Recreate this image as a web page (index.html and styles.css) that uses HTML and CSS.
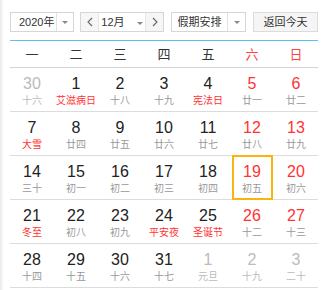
FILE: index.html
```html
<!DOCTYPE html>
<html lang="zh-CN">
<head>
    <meta charset="UTF-8">
    <meta name="viewport" content="width=device-width, initial-scale=1.0">
    <title>万年历</title>
    <link rel="stylesheet" href="styles.css">
</head>
<body>
    <div class="calendar">
        <div class="toolbar">
            <div class="picker year">
                <span class="value">2020年</span>
                <span class="drop"><i class="caret"></i></span>
            </div>
            <div class="picker month">
                <span class="nav"><svg width="6" height="10" viewBox="0 0 6 10"><path d="M5 1 1 5l4 4" fill="none" stroke="#666" stroke-width="1.1"/></svg></span>
                <span class="value">12月 <i class="caret"></i></span>
                <span class="nav"><svg width="6" height="10" viewBox="0 0 6 10"><path d="M1 1l4 4-4 4" fill="none" stroke="#666" stroke-width="1.1"/></svg></span>
            </div>
            <div class="picker holiday">
                <span class="value">假期安排</span>
                <span class="drop"><i class="caret"></i></span>
            </div>
            <button class="today">返回今天</button>
        </div>

        <div class="weekdays">
            <span>一</span><span>二</span><span>三</span><span>四</span><span>五</span>
            <span class="weekend">六</span><span class="weekend">日</span>
        </div>

        <div class="week">
            <div class="day other"><b>30</b><small>十六</small></div>
            <div class="day"><b>1</b><small class="fest">艾滋病日</small></div>
            <div class="day"><b>2</b><small>十八</small></div>
            <div class="day"><b>3</b><small>十九</small></div>
            <div class="day"><b>4</b><small class="fest">宪法日</small></div>
            <div class="day rest"><b>5</b><small>廿一</small></div>
            <div class="day rest"><b>6</b><small>廿二</small></div>
        </div>
        <div class="week">
            <div class="day"><b>7</b><small class="fest">大雪</small></div>
            <div class="day"><b>8</b><small>廿四</small></div>
            <div class="day"><b>9</b><small>廿五</small></div>
            <div class="day"><b>10</b><small>廿六</small></div>
            <div class="day"><b>11</b><small>廿七</small></div>
            <div class="day rest"><b>12</b><small>廿八</small></div>
            <div class="day rest"><b>13</b><small>廿九</small></div>
        </div>
        <div class="week">
            <div class="day"><b>14</b><small>三十</small></div>
            <div class="day"><b>15</b><small>初一</small></div>
            <div class="day"><b>16</b><small>初二</small></div>
            <div class="day"><b>17</b><small>初三</small></div>
            <div class="day"><b>18</b><small>初四</small></div>
            <div class="day rest selected"><b>19</b><small>初五</small></div>
            <div class="day rest"><b>20</b><small>初六</small></div>
        </div>
        <div class="week">
            <div class="day"><b>21</b><small class="fest">冬至</small></div>
            <div class="day"><b>22</b><small>初八</small></div>
            <div class="day"><b>23</b><small>初九</small></div>
            <div class="day"><b>24</b><small class="fest">平安夜</small></div>
            <div class="day"><b>25</b><small class="fest">圣诞节</small></div>
            <div class="day rest"><b>26</b><small>十二</small></div>
            <div class="day rest"><b>27</b><small>十三</small></div>
        </div>
        <div class="week">
            <div class="day"><b>28</b><small>十四</small></div>
            <div class="day"><b>29</b><small>十五</small></div>
            <div class="day"><b>30</b><small>十六</small></div>
            <div class="day"><b>31</b><small>十七</small></div>
            <div class="day other"><b>1</b><small>元旦</small></div>
            <div class="day other"><b>2</b><small>十九</small></div>
            <div class="day other"><b>3</b><small>二十</small></div>
        </div>
    </div>
</body>
</html>
```

FILE: styles.css
```css
html{
    background: linear-gradient(to right, #e9e9e9, #fff 4px);
}
body{
    margin: 0;
    font-family: "Noto Sans CJK SC", "Liberation Sans", sans-serif;
    color: #333;
}
.calendar{
    width: 308px;
    padding: 12px 0 0 10px;
}

/* 상단 선택 영역 */
.toolbar{
    display: flex;
    height: 20px;
    font-family: "Liberation Sans", "Noto Sans CJK SC", sans-serif;
    font-size: 11px;
    white-space: nowrap;
}
.picker{
    display: flex;
    box-sizing: border-box;
    height: 20px;
    border: 1px solid #d6d6d6;
    background: #fff;
    line-height: 18px;
}
.year{
    width: 64px;
}
.year .value{
    width: 45px;
    padding-left: 8px;
    box-sizing: border-box;
}
.drop{
    flex: 1;
    border-left: 1px solid #e2e2e2;
    display: flex;
    align-items: center;
    justify-content: center;
}
.caret{
    display: inline-block;
    width: 0;
    height: 0;
    border-left: 3px solid transparent;
    border-right: 3px solid transparent;
    border-top: 3px solid #8a8a8a;
    vertical-align: middle;
}
.month{
    width: 84px;
    margin-left: 6px;
}
.month .nav{
    width: 17px;
    background: #f6f6f6;
    display: flex;
    align-items: center;
    justify-content: center;
}
.month .nav:first-child{
    border-right: 1px solid #e6e6e6;
}
.month .nav:last-child{
    border-left: 1px solid #e6e6e6;
}
.month .value{
    flex: 1;
    text-align: center;
}
.month .value .caret{
    margin-left: 9px;
}
.holiday{
    width: 75px;
    margin-left: 7px;
}
.holiday .value{
    width: 55px;
    text-align: center;
}
.today{
    width: 65px;
    height: 20px;
    margin-left: 7px;
    padding: 0;
    border: 1px solid #dcdcdc;
    background: #f5f5f5;
    font-family: inherit;
    font-size: 11px;
    color: #333;
    line-height: 18px;
}

/* 요일 */
.weekdays{
    display: grid;
    grid-template-columns: repeat(7, 44px);
    margin-top: 8px;
    height: 26px;
    border-top: 1px solid #5bbdf2;
    border-bottom: 1px solid #d4d4d4;
    font-size: 13px;
    line-height: 26px;
    text-align: center;
    color: #333;
}
.weekdays .weekend{
    color: #f44;
}

/* 날짜 */
.week{
    display: grid;
    grid-template-columns: repeat(7, 44px);
    height: 43px;
    border-bottom: 1px solid #dcdcdc;
}
.day{
    position: relative;
    text-align: center;
    padding-top: 7px;
}
.day b{
    display: block;
    font-family: "Liberation Sans", sans-serif;
    font-weight: normal;
    font-size: 16px;
    line-height: 18px;
    color: #222;
}
.day small{
    display: block;
    font-size: 10px;
    line-height: 13px;
    color: #999;
}
.day small.fest{
    color: #f33;
}
.day.rest b{
    color: #f33;
}
.day.other b{
    color: #bbb;
}
.day.other small{
    color: #bbb;
}
.selected::after{
    content: "";
    position: absolute;
    top: -1px;
    bottom: -1px;
    left: 2px;
    right: 1px;
    border: 2px solid #fbb40d;
}
```
